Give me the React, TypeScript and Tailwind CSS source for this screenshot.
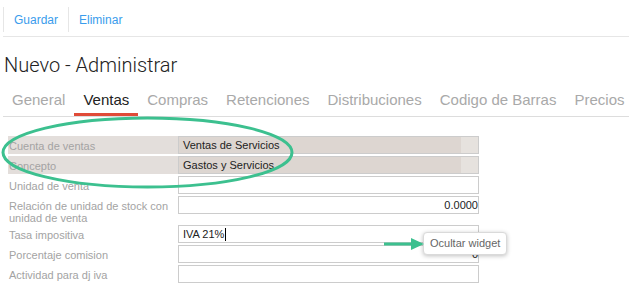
const tabs = ["General", "Ventas", "Compras", "Retenciones", "Distribuciones", "Codigo de Barras", "Precios"];

type Row = { label: string; value?: string; align?: "left" | "right"; readonly?: boolean; cursor?: boolean; tall?: boolean };

const rows: Row[] = [
  { label: "Cuenta de ventas", value: "Ventas de Servicios", readonly: true },
  { label: "Concepto", value: "Gastos y Servicios", readonly: true },
  { label: "Unidad de venta" },
  { label: "Relación de unidad de stock con unidad de venta", value: "0.0000", align: "right", tall: true },
  { label: "Tasa impositiva", value: "IVA 21%", cursor: true },
  { label: "Porcentaje comision", value: "0", align: "right" },
  { label: "Actividad para dj iva" },
];

function FieldRow({ row }: { row: Row }) {
  return (
    <div className={`flex items-start ${row.tall ? "h-[27px]" : "h-[18px]"}`}>
      <div
        className={`w-[170px] h-full pl-[1px] pt-[4px] pr-2 text-[11px] leading-[12px] text-[#a3a3a3] ${
          row.readonly ? "bg-[#e3dedb]" : ""
        }`}
      >
        {row.label}
      </div>
      <div
        className={`w-[301px] h-[18px] border border-[#cccccc] flex items-center text-[11px] text-[#222] ${
          row.readonly ? "bg-[#ddd6d1]" : "bg-white"
        }`}
      >
        <div className={`flex-1 flex items-center h-full pl-[4px] ${row.align === "right" ? "justify-end pl-0" : ""}`}>
          <span>{row.value}</span>
          {row.cursor && <span className="w-px h-[13px] bg-black ml-px" />}
        </div>
        {row.readonly && <div className="w-[17px] h-full bg-[#e6e2de]" />}
      </div>
    </div>
  );
}

export default function App() {
  return (
    <div className="relative w-[629px] h-[294px] overflow-hidden bg-white font-['Liberation_Sans',Arial,sans-serif]">
      {/* toolbar */}
      <div className="pl-[3px]">
        <div className="h-[37px] pt-[7px] border-b border-[#e6e6e6]">
          <div className="flex h-[25px] text-[12px] text-[#3a9cec]">
            <div className="flex items-center border-l border-[#e6e6e6] pl-[10px] pr-[10px]">Guardar</div>
            <div className="flex items-center border-l border-[#e6e6e6] pl-[10px] pr-[10px]">Eliminar</div>
          </div>
        </div>
      </div>

      {/* title */}
      <h1 className="mt-[15px] ml-[4px] h-[26px] text-[20px] leading-[26px] font-light text-[#222] font-['Roboto',sans-serif]">
        Nuevo - Administrar
      </h1>

      {/* tabs */}
      <div className="ml-[3px] flex border-b border-[#dddddd] text-[15px] leading-[17px]">
        {tabs.map((t) => (
          <div
            key={t}
            className={`px-[9px] pt-[13px] pb-[5px] border-b-[3px] whitespace-nowrap ${
              t === "Ventas" ? "border-[#e04b38] text-[#222]" : "border-transparent text-[#a9a9a9]"
            }`}
          >
            {t}
          </div>
        ))}
      </div>

      {/* form */}
      <div className="mt-[19px] ml-[8px] flex flex-col gap-[2px]">
        {rows.map((r) => (
          <FieldRow key={r.label} row={r} />
        ))}
      </div>

      {/* tooltip */}
      <div className="absolute left-[423px] top-[232px] w-[84px] h-[23px] rounded-[4px] border border-[#dadada] bg-white shadow-[0_1px_4px_rgba(0,0,0,0.25)] flex items-center pl-[6px] text-[11px] text-[#666]">
        Ocultar widget
      </div>

      {/* annotations */}
      <svg className="absolute left-0 top-0 pointer-events-none" width="629" height="294" viewBox="0 0 629 294">
        <ellipse cx="147.5" cy="152.5" rx="144.5" ry="34.5" fill="none" stroke="#3cc08f" strokeWidth="3" />
        <line x1="384" y1="244" x2="414" y2="244" stroke="#3cc08f" strokeWidth="3" />
        <polygon points="411,238 424,244 411,250" fill="#3cc08f" />
      </svg>
    </div>
  );
}
